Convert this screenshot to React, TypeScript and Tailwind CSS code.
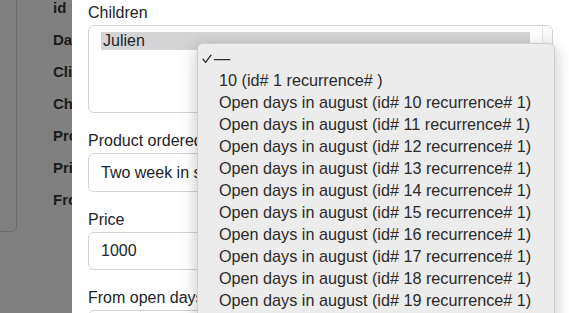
import React from "react";

const items = [
  "10 (id# 1 recurrence# )",
  "Open days in august (id# 10 recurrence# 1)",
  "Open days in august (id# 11 recurrence# 1)",
  "Open days in august (id# 12 recurrence# 1)",
  "Open days in august (id# 13 recurrence# 1)",
  "Open days in august (id# 14 recurrence# 1)",
  "Open days in august (id# 15 recurrence# 1)",
  "Open days in august (id# 16 recurrence# 1)",
  "Open days in august (id# 17 recurrence# 1)",
  "Open days in august (id# 18 recurrence# 1)",
  "Open days in august (id# 19 recurrence# 1)",
];

const leftLabels = ["id", "Date", "Client", "Children", "Product", "Price", "From"];

export default function App() {
  return (
    <div
      className="relative flex h-[313px] w-[569px] overflow-hidden bg-white"
      style={{ fontFamily: '"Liberation Sans", Arial, sans-serif' }}
    >
      {/* Dimmed background page */}
      <div className="relative h-full w-[72px] shrink-0 overflow-hidden bg-[#808080]">
        <div className="absolute left-[-40px] top-[-10px] h-[242px] w-[57px] rounded-br-[6px] border border-[#6c6c6c]" />
        <div className="absolute left-[53px] top-0 flex flex-col">
          {leftLabels.map((l) => (
            <div key={l} className="h-[32px] whitespace-nowrap text-[15px] font-bold leading-[16px] text-[#1b1b1b]">
              {l}
            </div>
          ))}
        </div>
      </div>

      {/* Modal */}
      <div className="flex-1 bg-white pl-4 pr-4 pt-[1px] text-[16px] text-[#212529]">
        <div className="h-6 leading-6">Children</div>
        <div className="relative mb-4 flex h-[88px] rounded-[6px] border border-[#ced4da]">
          <div className="flex-1 pl-3 pr-3 pt-[6px]">
            <div className="h-[18px] bg-[#d4d4d4] pl-[2px] leading-[18px]">Julien</div>
          </div>
          <div className="w-[10px] rounded-r-[6px] border-l border-[#e4e4e4] bg-[#fafafa]" />
        </div>

        <div className="h-6 leading-6">Product ordered</div>
        <div className="mb-4 flex h-[39px] items-center whitespace-nowrap rounded-[6px] border border-[#ced4da] pl-3">
          Two week in summer
        </div>

        <div className="h-6 leading-6">Price</div>
        <div className="mb-4 flex h-[38px] items-center rounded-[6px] border border-[#ced4da] pl-3">1000</div>

        <div className="h-6 leading-6">From open days</div>
        <div className="h-[38px] rounded-[6px] border border-[#ced4da]" />
      </div>

      {/* Native select dropdown */}
      <div className="absolute left-[197px] top-[43px] h-[290px] w-[358px] rounded-[6px] border border-[#cfcfcf] bg-[#ececec] pt-[3px] shadow-[0_4px_16px_rgba(0,0,0,0.25)]">
        <div className="flex h-[22px] items-center pl-[4px] text-[16.2px] text-[#2a2a2a]">
          <svg width="10" height="10" viewBox="0 0 10 10" className="mr-[2px] mt-[1px]">
            <path d="M1 5.2 L3.6 8.4 L9 1.2" fill="none" stroke="#2a2a2a" strokeWidth="1.3" strokeLinecap="round" strokeLinejoin="round" />
          </svg>
          <span>—</span>
        </div>
        {items.map((t) => (
          <div key={t} className="flex h-[22px] items-center whitespace-nowrap pl-[21px] text-[16.2px] text-[#2a2a2a]">
            {t}
          </div>
        ))}
      </div>
    </div>
  );
}
